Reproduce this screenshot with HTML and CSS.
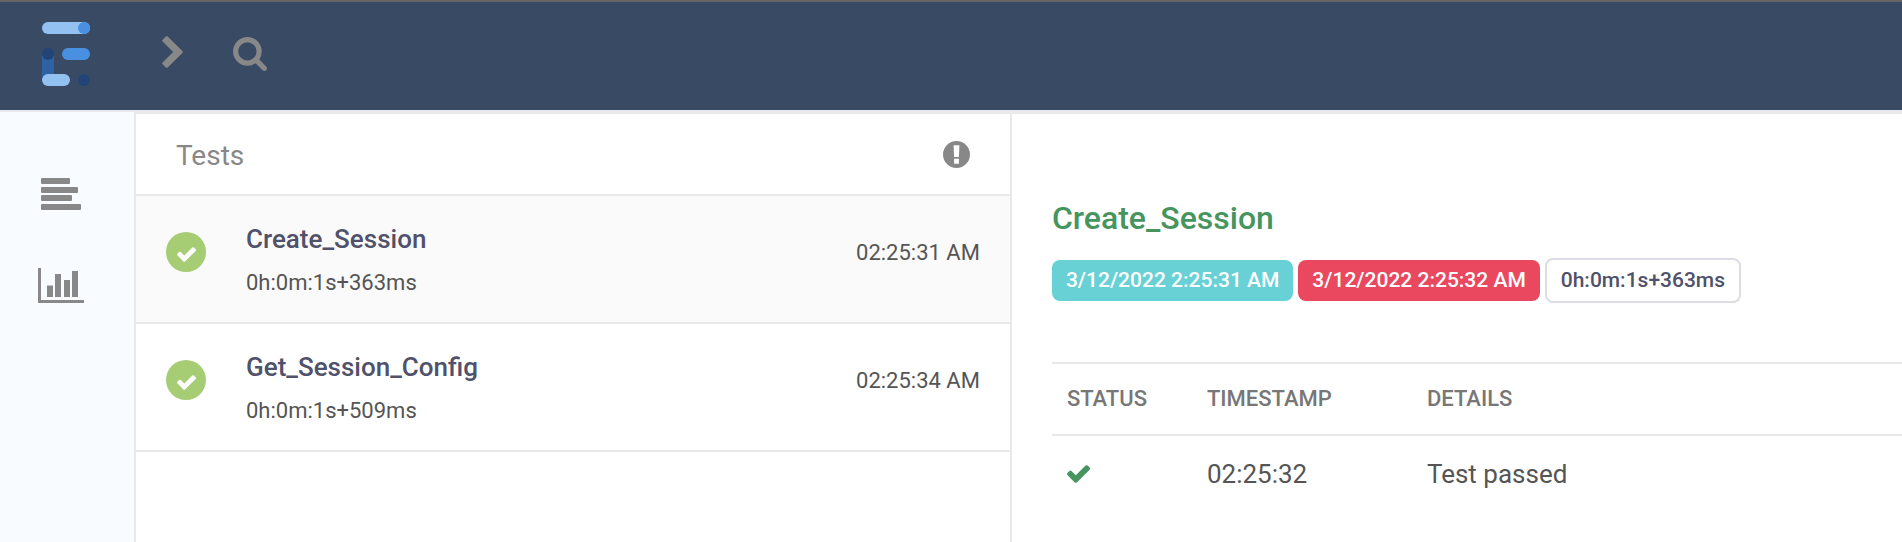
FILE: index.html
```html
<!DOCTYPE html>
<html lang="en">
<head>
<meta charset="utf-8">
<title>Test report</title>
<link rel="stylesheet" href="styles.css">
</head>
<body>
<svg class="sprite" aria-hidden="true">
  <symbol id="check" viewBox="121 334 1550 1188"><path d="M1671 566q0 40-28 68l-724 724-136 136q-28 28-68 28t-68-28l-136-136-362-362q-28-28-28-68t28-68l136-136q28-28 68-28t68 28l294 295 656-657q28-28 68-28t68 28l136 136q28 28 28 68z"/></symbol>
</svg>
<header class="topbar">
  <a class="logo" href="#" aria-label="Home">
    <svg width="48" height="64" viewBox="0 0 48 64">
      <rect width="48" height="12" rx="6" fill="#93c1f1"/>
      <circle cx="42" cy="6" r="6" fill="#4a90e2"/>
      <rect y="32" width="12" height="26" fill="#2f62a3"/>
      <circle cx="6" cy="32" r="6" fill="#224476"/>
      <rect x="20" y="26" width="28" height="12" rx="6" fill="#4a90e2"/>
      <rect y="52" width="28" height="12" rx="6" fill="#93c1f1"/>
      <circle cx="42" cy="58" r="6" fill="#224476"/>
    </svg>
  </a>
  <button class="icon-button toggle" aria-label="Expand">
    <svg width="21" height="32" viewBox="90 -192 1036 1612"><path d="M1107 659l-742 742q-19 19-45 19t-45-19l-166-166q-19-19-19-45t19-45l531-531-531-531q-19-19-19-45t19-45l166-166q19-19 45-19t45 19l742 742q19 19 19 45t-19 45z"/></svg>
  </button>
  <button class="icon-button search" aria-label="Search">
    <svg width="34" height="34" viewBox="64 128 1664 1664"><path d="M1216 832q0-185-131.500-316.500t-316.500-131.500-316.500 131.500-131.500 316.500 131.500 316.500 316.500 131.500 316.500-131.500 131.500-316.500zm512 832q0 52-38 90t-90 38q-54 0-90-38l-343-342q-179 124-399 124-143 0-273.500-55.500t-225-150-150-225-55.500-273.500 55.500-273.500 150-225 225-150 273.500-55.500 273.500 55.500 225 150 150 225 55.500 273.500q0 220-124 399l343 343q37 37 37 90z"/></svg>
  </button>
</header>
<div class="layout">
  <nav class="sidebar">
    <a href="#" aria-label="Tests">
      <svg width="46" height="32" viewBox="0 0 46 32"><rect x="3" width="29" height="6" rx="1"/><rect x="3" y="9" width="37" height="6" rx="1"/><rect x="3" y="17" width="31" height="6" rx="1"/><rect x="3" y="26" width="40" height="6" rx="1"/></svg>
    </a>
    <a href="#" aria-label="Dashboard">
      <svg width="46" height="35" viewBox="0 0 46 35"><path d="M0 0h3v32h43v3H0zM9 17.500h6v11.500H9zM17 6h6v23h-6zM26 12h6v17h-6zM34 3h6v26h-6z"/></svg>
    </a>
  </nav>
  <section class="tests">
    <div class="tests-head">
      <h2>Tests</h2>
      <button class="icon-button" aria-label="Filter by status">
        <svg width="27" height="27" viewBox="0 0 28 28"><circle cx="14" cy="14" r="14"/><path fill="#fff" d="M11 4.500h6l-.5 12h-5zM11.500 18.500h5v5h-5z"/></svg>
      </button>
    </div>
    <ul class="test-list">
      <li class="test active">
        <span class="badge-pass"><svg width="19" height="15"><use href="#check"/></svg></span>
        <div class="test-info"><p class="name">Create_Session</p><p class="duration">0h:0m:1s+363ms</p></div>
        <time>02:25:31 AM</time>
      </li>
      <li class="test">
        <span class="badge-pass"><svg width="19" height="15"><use href="#check"/></svg></span>
        <div class="test-info"><p class="name">Get_Session_Config</p><p class="duration">0h:0m:1s+509ms</p></div>
        <time>02:25:34 AM</time>
      </li>
    </ul>
  </section>
  <main class="detail">
    <h1>Create_Session</h1>
    <div class="tags">
      <span class="tag start">3/12/2022 2:25:31 AM</span>
      <span class="tag end">3/12/2022 2:25:32 AM</span>
      <span class="tag length">0h:0m:1s+363ms</span>
    </div>
    <table class="steps">
      <thead><tr><th class="col-status">Status</th><th class="col-time">Timestamp</th><th>Details</th></tr></thead>
      <tbody><tr><td><svg class="pass" width="23" height="18" role="img" aria-label="Pass"><use href="#check"/></svg></td><td>02:25:32</td><td>Test passed</td></tr></tbody>
    </table>
  </main>
</div>
</body>
</html>
```
FILE: styles.css
```css
* { box-sizing: border-box; }
body {
  margin: 0;
  min-height: 100vh;
  display: flex;
  flex-direction: column;
  background: #fff;
  color: #555;
  font-family: Roboto, "Liberation Sans", sans-serif;
  font-size: 22px;
}
h1, h2, p, ul { margin: 0; padding: 0; }
svg { display: block; }
.sprite { position: absolute; width: 0; height: 0; }
.topbar {
  display: flex;
  align-items: center;
  height: 110px;
  padding: 0 42px;
  border-top: 2px solid #666;
  background: #394a64;
}
.logo { margin-right: 72px; padding-bottom: 4px; }
.icon-button { padding: 0; border: 0; background: none; fill: #888; }
.toggle { margin-right: 50px; padding-bottom: 8px; }
.search { padding-bottom: 4px; }
.layout { flex: 1; display: flex; border-top: 2px solid #e8e9eb; }
.sidebar {
  flex: none;
  width: 136px;
  display: flex;
  flex-direction: column;
  gap: 58px;
  padding: 66px 38px;
  border-right: 2px solid #e8e9eb;
  background: #f8fbff;
  fill: #888;
}
.tests {
  flex: none;
  width: calc(46% + 1px);
  border-top: 2px solid #e8e9eb;
  border-right: 2px solid #e8e9eb;
}
.tests-head {
  display: flex;
  align-items: center;
  justify-content: space-between;
  height: 82px;
  padding: 0 40px;
  border-bottom: 2px solid #e8e9eb;
}
.tests-head h2 { padding-top: 4px; font-size: 28px; font-weight: 400; color: #888; line-height: 32px; }
.test-list { list-style: none; }
.test {
  display: flex;
  padding: 26px 30px 22px;
  border-bottom: 2px solid #e8e9eb;
}
.test.active { background: #fafafa; }
.badge-pass {
  display: flex;
  align-items: center;
  justify-content: center;
  width: 40px;
  height: 40px;
  margin: 10px 40px 0 0;
  padding-top: 4px;
  border-radius: 50%;
  background: #a6cc74;
  fill: #fff;
}
.test-info { flex: 1; }
.name { font-size: 26px; font-weight: 500; line-height: 34px; color: #50516a; }
.duration { margin-top: 10px; line-height: 34px; }
.test time { line-height: 34px; padding-top: 14px; }
.detail {
  flex: 1;
  padding: 84px 0 0 40px;
  border-top: 2px solid #e8e9eb;
}
.detail h1 { font-size: 32px; font-weight: 500; line-height: 40px; color: #46955f; }
.tags { display: flex; align-items: center; gap: 5px; margin-top: 20px; }
.tag {
  padding: 6px 14px;
  border-radius: 8px;
  font-size: 21px;
  font-weight: 500;
  line-height: 29px;
  color: #fff;
}
.start { background: #67d1d6; }
.end { background: #e9485f; }
.length { border: 2px solid #dcdce4; background: #fff; color: #50516a; }
.steps { width: 100%; margin-top: 59px; border-collapse: collapse; border-top: 2px solid #e8e9eb; }
.steps th, .steps td { padding: 0 15px; text-align: left; }
.steps th {
  height: 72px;
  padding-bottom: 2px;
  border-bottom: 2px solid #e8e9eb;
  font-weight: 500;
  text-transform: uppercase;
  color: #777;
}
.steps td { height: 76px; font-size: 26px; }
.col-status { width: 140px; }
.col-time { width: 220px; }
.pass { fill: #46955f; }
```
